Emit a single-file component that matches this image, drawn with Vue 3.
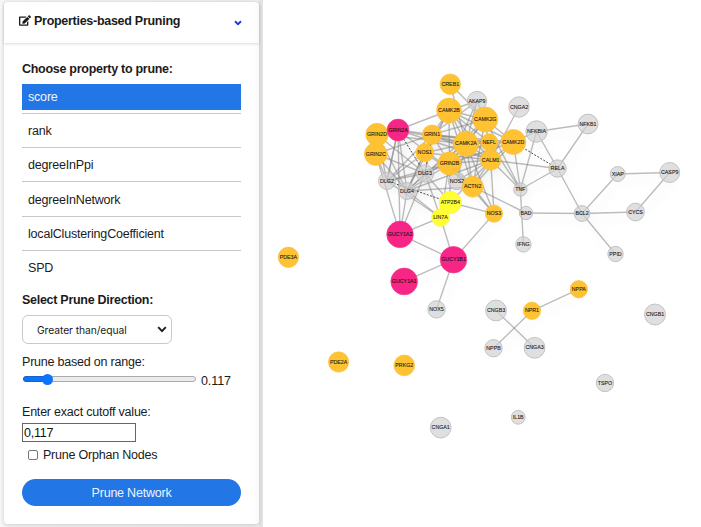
<script setup>
import { ref } from 'vue'

const properties = ['score', 'rank', 'degreeInPpi', 'degreeInNetwork', 'localClusteringCoefficient', 'SPD']
const selected = ref('score')
const cutoff = ref('0,117')
const orphans = ref(false)

// id: [x, y, radius, kind]
const nodes = {
  AKAP9: [477, 101, 10, 'g'], CNGA2: [519, 107, 10.5, 'g'], NFKBIA: [536.5, 131.5, 11, 'g'], NFKB1: [588, 124, 10.2, 'g'],
  RELA: [557.5, 168.5, 9, 'g'], XIAP: [617.7, 174, 7.8, 'g'], CASP9: [669.7, 172.5, 10.3, 'g'],
  CYCS: [635.5, 212, 9.2, 'g'], BCL2: [582, 213.5, 8.2, 'g'], PPID: [615.5, 254, 8, 'g'],
  TNF: [520.4, 189.5, 7, 'g'], BAD: [526, 213, 7, 'g'], IFNG: [523.4, 244.4, 8, 'g'],
  NOS2: [457, 181, 9, 'g'], DLG3: [425, 173.5, 9, 'g'], DLG2: [387, 181, 8.8, 'g'], DLG4: [407, 191, 8.8, 'g'],
  NOX5: [436.5, 309.4, 9, 'g'], CNGB3: [496, 310.5, 10.7, 'g'], NPPB: [493.5, 348.2, 9, 'g'], CNGA3: [534.6, 347.8, 10.7, 'g'],
  CNGB1: [655, 314.5, 10.8, 'g'], TSPO: [605, 383, 9, 'g'], IL1B: [518.2, 417.3, 7.2, 'g'], CNGA1: [440.7, 427.6, 10.7, 'g'],
  CREB1: [450.3, 84.2, 10.6, 'o'], CAMK2B: [449, 110.5, 12.7, 'o'], CAMK2G: [485.3, 119.5, 12.8, 'o'],
  GRIN2D: [377, 134.5, 11.5, 'o'], GRIN2A: [398, 130, 11.2, 'p'], GRIN2C: [375.8, 154, 11.7, 'o'],
  GRIN1: [432, 134.7, 10, 'o'], NOS1: [424.8, 152.7, 9.4, 'o'], CAMK2A: [466, 143.8, 12.8, 'o'],
  CAMK2D: [513.3, 142, 12.8, 'o'], NEFL: [489.3, 142.3, 8.8, 'o'], GRIN2B: [449.5, 163.5, 11.8, 'o'],
  CALM1: [490.7, 160, 10.5, 'o'], ACTN2: [472.7, 186.7, 10.8, 'o'], NOS3: [494, 213.6, 9, 'o'],
  ATP2B4: [450.3, 202.5, 11.4, 'y'], LIN7A: [440.5, 217.5, 9.2, 'y'],
  GUCY1A2: [400, 234.4, 13.6, 'p'], GUCY1B1: [453.5, 259.7, 13.6, 'p'], GUCY1A1: [404.2, 281.4, 13.7, 'p'],
  PDE3A: [288.4, 257.3, 10.5, 'o'], PDE2A: [338.6, 362, 10.5, 'o'], PRKG2: [404.3, 365.4, 10.7, 'o'],
  NPPA: [578.8, 289.2, 9, 'o'], NPR1: [532, 310.8, 9, 'o']
}

const adjacency = {
  CREB1: ['CAMK2G', 'CAMK2A'],
  AKAP9: ['CAMK2B', 'GRIN1', 'CAMK2G', 'CAMK2A', 'GRIN2B'],
  CNGA2: ['CALM1'],
  NFKBIA: ['CAMK2D', 'NFKB1', 'RELA', 'TNF'],
  RELA: ['NFKB1', 'TNF', 'CALM1', 'BCL2'],
  BCL2: ['BAD', 'CYCS', 'XIAP', 'PPID'],
  CASP9: ['XIAP', 'CYCS'],
  TNF: ['IFNG', 'CALM1', 'CAMK2G', 'NEFL'],
  BAD: ['ACTN2'],
  GRIN2A: ['CAMK2B', 'CAMK2A', 'NEFL', 'DLG4', 'DLG2', 'ACTN2', 'GUCY1A2', 'CALM1'],
  GRIN2D: ['DLG2', 'DLG3', 'DLG4', 'CAMK2A'],
  GRIN2C: ['GRIN1', 'DLG2', 'DLG4', 'DLG3', 'GUCY1A2'],
  GRIN1: ['CAMK2B', 'CAMK2G', 'CAMK2A', 'NEFL', 'CAMK2D', 'CALM1', 'GRIN2B', 'DLG4', 'DLG2'],
  NOS1: ['CAMK2A', 'CALM1', 'DLG4', 'DLG2', 'CAMK2B', 'ACTN2'],
  DLG3: ['GRIN1', 'GRIN2B', 'CAMK2A', 'ATP2B4', 'LIN7A', 'GUCY1A2', 'NEFL'],
  DLG2: ['GRIN2B', 'GRIN2A', 'LIN7A', 'DLG3'],
  DLG4: ['GRIN2B', 'GUCY1A2', 'LIN7A', 'ACTN2', 'CAMK2B', 'CAMK2G', 'CALM1', 'DLG3'],
  CAMK2B: ['CAMK2G', 'CAMK2A', 'CAMK2D', 'CALM1', 'GRIN2B', 'ACTN2', 'NEFL'],
  CAMK2G: ['GRIN2B', 'CAMK2A', 'CALM1', 'ACTN2', 'CAMK2D'],
  CAMK2A: ['NEFL', 'CALM1', 'ACTN2', 'NOS3', 'CAMK2D', 'GRIN2B'],
  CAMK2D: ['ACTN2', 'GRIN2B', 'CALM1', 'TNF'],
  CALM1: ['NOS3', 'NOS2', 'ATP2B4', 'ACTN2', 'GRIN2B'],
  GRIN2B: ['ATP2B4', 'ACTN2', 'LIN7A', 'NOS3'],
  ACTN2: ['NOS3'],
  ATP2B4: ['NOS3'],
  NOS2: ['CAMK2A'],
  LIN7A: ['GUCY1A2', 'GUCY1B1'],
  GUCY1B1: ['GUCY1A2', 'GUCY1A1', 'NOX5', 'NOS3'],
  CNGB3: ['CNGA3'],
  NPR1: ['NPPB', 'NPPA']
}
const dashedPairs = [['CAMK2D', 'RELA'], ['DLG2', 'ATP2B4'], ['GRIN2A', 'DLG3'], ['GRIN1', 'DLG3']]

const line = (a, b) => ({ x1: nodes[a][0], y1: nodes[a][1], x2: nodes[b][0], y2: nodes[b][1], key: a + b })
const edges = Object.entries(adjacency).flatMap(([a, list]) => list.map(b => line(a, b)))
const dashed = dashedPairs.map(([a, b]) => line(a, b))
const circles = Object.entries(nodes).map(([id, [x, y, r, kind]]) => ({ id, x, y, r, kind }))
</script>

<template>
  <main class="app">
    <aside class="sidebar">
      <div class="card">
        <header class="card-head">
          <svg class="edit" viewBox="0 0 576 512">
            <path d="M402.600 83.200l90.200 90.200c3.800 3.800 3.800 10 0 13.800L274.400 405.600l-92.800 10.300c-12.400 1.400-22.900-9.100-21.500-21.500l10.300-92.800L388.800 83.200c3.800-3.800 10-3.800 13.800 0zm162-22.900l-48.800-48.800c-15.200-15.200-39.900-15.200-55.200 0l-35.400 35.400c-3.800 3.800-3.800 10 0 13.800l90.200 90.200c3.800 3.800 10 3.800 13.800 0l35.400-35.400c15.200-15.300 15.200-40 0-55.200zM384 346.200V448H64V128h229.800c3.200 0 6.200-1.300 8.500-3.500l40-40c7.600-7.600 2.200-20.500-8.500-20.500H48C21.500 64 0 85.500 0 112v352c0 26.500 21.500 48 48 48h352c26.500 0 48-21.500 48-48V306.200c0-10.700-12.900-16-20.500-8.500l-40 40c-2.200 2.300-3.500 5.300-3.500 8.500z" />
          </svg>
          <h1>Properties-based Pruning</h1>
          <svg class="chevron" viewBox="0 0 8 6"><path d="M1 1.300 4 4.100 7 1.300" /></svg>
        </header>
        <section class="body">
          <h2>Choose property to prune:</h2>
          <ul>
            <li v-for="p in properties" :key="p">
              <div class="item" :class="{ active: p === selected }" @click="selected = p">{{ p }}</div>
            </li>
          </ul>
          <h2 class="direction">Select Prune Direction:</h2>
          <div class="select">
            <span>Greater than/equal</span>
            <svg viewBox="0 0 10 7"><path d="M1.200 1.200 5 5.200 8.800 1.200" /></svg>
          </div>
          <p class="range-label">Prune based on range:</p>
          <div class="range">
            <div class="track"><div class="fill"></div><div class="thumb"></div></div>
            <span>0.117</span>
          </div>
          <p class="cutoff-label">Enter exact cutoff value:</p>
          <input v-model="cutoff" class="cutoff" type="text" />
          <label class="orphans">
            <input v-model="orphans" type="checkbox" />
            <span>Prune Orphan Nodes</span>
          </label>
          <button type="button">Prune Network</button>
        </section>
      </div>
    </aside>
    <svg class="network" viewBox="263 0 438 527">
      <g class="edges">
        <line v-for="e in edges" :key="e.key" :x1="e.x1" :y1="e.y1" :x2="e.x2" :y2="e.y2" />
      </g>
      <g class="dashed">
        <line v-for="e in dashed" :key="e.key" :x1="e.x1" :y1="e.y1" :x2="e.x2" :y2="e.y2" />
      </g>
      <g v-for="n in circles" :key="n.id">
        <circle :class="n.kind" :cx="n.x" :cy="n.y" :r="n.r - 0.3" />
        <text :x="n.x" :y="n.y + 1.5">{{ n.id }}</text>
      </g>
    </svg>
  </main>
</template>

<style>
body { margin: 0; background: #fff; overflow: hidden; }
</style>

<style scoped>
* { box-sizing: border-box; }
.app { display: flex; width: 701px; height: 527px; overflow: hidden; font-family: "Liberation Sans", Arial, sans-serif; font-size: 12.5px; letter-spacing: -.19px; color: #1b1b1b; background: #fff; }
.sidebar { width: 263px; flex: none; padding: 2px 4px 3px; background: linear-gradient(90deg, #f8f8f8 0, #f4f4f4 4px, #eee 258px, #e2e2e2 260px, #e6e6e6 263px); }
.card { height: 522px; background: linear-gradient(90deg, #fff 97%, #fafafa); border-radius: 4px; box-shadow: 0 1px 4px rgba(0, 0, 0, .16); }
.card-head { display: flex; align-items: center; height: 41px; padding: 0 17px 4px 15px; border-radius: 4px 4px 0 0; box-shadow: 0 1px 3px rgba(0, 0, 0, .15); }
.edit { width: 12px; height: 11px; margin-right: 3px; fill: #1b1b1b; }
h1, h2 { margin: 0; font-size: 12.5px; font-weight: 700; line-height: 16px; letter-spacing: -.28px; white-space: nowrap; }
.chevron { width: 8px; height: 6px; margin: 4px 0 0 auto; fill: none; stroke: #1838e0; stroke-width: 1.900; }
.body { display: flex; flex-direction: column; padding: 18px 18px 0; }
ul { list-style: none; margin: 7px 0 0; padding: 0; }
li { height: 34.200px; padding-bottom: 3px; }
.item { height: 26px; padding-left: 6px; line-height: 26px; }
li:not(:last-child)::after { content: ""; display: block; height: 1px; margin-top: 3px; background: #c8c8c8; }
.active { background: #2376e5; color: #eef3fb; }
.direction { margin-top: 3px; }
.select { display: flex; align-items: center; justify-content: space-between; width: 150px; height: 29px; margin-top: 7px; padding: 0 4px 0 14px; border: 1px solid #c9c9c9; border-radius: 6px; font-family: Inter, sans-serif; font-size: 10.300px; letter-spacing: -.08px; }
.select svg { width: 10px; height: 7px; fill: none; stroke: #1b1b1b; stroke-width: 1.900; }
p { margin: 0; line-height: 16px; letter-spacing: -.21px; }
.range-label { margin-top: 10px; }
.range { display: flex; align-items: center; height: 18px; }
.range span { margin: 3px 0 0 5px; letter-spacing: -.1px; }
.track { position: relative; width: 173px; height: 6px; margin-left: 1px; border: 1px solid #aaa; border-radius: 3px; background: #ebebeb; }
.fill { width: 24px; height: 6px; margin: -1px; border: 1px solid #1763c8; border-radius: 3px; background: #0a75ff; }
.thumb { position: absolute; left: 18px; top: -3.500px; width: 11px; height: 11px; border-radius: 50%; background: #0a75ff; }
.cutoff-label { margin-top: 16px; }
.cutoff { width: 114px; height: 19px; margin-top: 3px; padding: 0 1px; border: 1px solid #666; font: 12.500px "Liberation Sans", sans-serif; letter-spacing: -.25px; color: #111; }
.orphans { display: flex; align-items: center; height: 16px; margin-top: 5px; padding-left: 6px; letter-spacing: -.22px; }
.orphans input { appearance: none; width: 10px; height: 10px; margin: 0 5px 0 0; border: 1px solid #777; border-radius: 2px; background: #fff; }
button { height: 27px; margin-top: 16px; padding: 0; border: 0; border-radius: 14px; background: #2376e5; color: #eef3fb; font: 12.500px "Liberation Sans", sans-serif; letter-spacing: -.22px; }
.network { width: 438px; height: 527px; flex: none; letter-spacing: 0; }
.edges { stroke: #858585; stroke-opacity: .55; stroke-width: 1.400; filter: drop-shadow(4px 6px 5px rgba(0, 0, 0, .12)); }
.dashed { stroke: #333; stroke-width: .9; stroke-dasharray: 2 1.500; }
.g { fill: #d2d2d2; fill-opacity: .7; stroke: #b8b8b8; stroke-width: .8; }
.o { fill: #ffc233; stroke: #f8bd34; stroke-width: .6; }
.p { fill: #f72585; stroke: #f23a8c; stroke-width: .6; }
.y { fill: #ffff33; stroke: #f7f52e; stroke-width: .6; }
text { font: 5.300px "Liberation Sans", sans-serif; text-anchor: middle; fill: #111; stroke: #111; stroke-width: .08; }
</style>
